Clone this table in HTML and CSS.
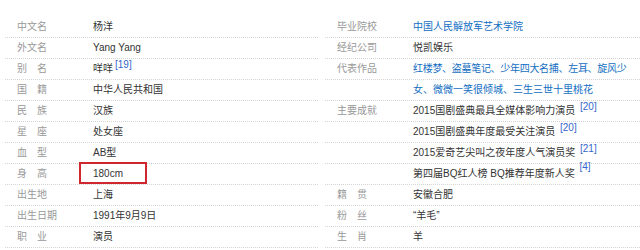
FILE: index.html
```html
<!DOCTYPE html>
<html lang="zh-CN">
<head>
<meta charset="utf-8">
<title>杨洋 基本信息</title>
<link rel="stylesheet" href="styles.css">
</head>
<body>
<div class="info">
  <dl class="col">
    <div class="row"><dt class="name">中文名</dt><dd class="value">杨洋</dd></div>
    <div class="row"><dt class="name">外文名</dt><dd class="value">Yang Yang</dd></div>
    <div class="row"><dt class="name two">别名</dt><dd class="value">咩咩<sup class="ref">[19]</sup></dd></div>
    <div class="row"><dt class="name two">国籍</dt><dd class="value">中华人民共和国</dd></div>
    <div class="row"><dt class="name two">民族</dt><dd class="value">汉族</dd></div>
    <div class="row"><dt class="name two">星座</dt><dd class="value">处女座</dd></div>
    <div class="row"><dt class="name two">血型</dt><dd class="value">AB型</dd></div>
    <div class="row"><dt class="name two">身高</dt><dd class="value marked">180cm<span class="mark"></span></dd></div>
    <div class="row"><dt class="name">出生地</dt><dd class="value">上海</dd></div>
    <div class="row"><dt class="name">出生日期</dt><dd class="value">1991年9月9日</dd></div>
    <div class="row"><dt class="name two">职业</dt><dd class="value">演员</dd></div>
  </dl>
  <dl class="col">
    <div class="row"><dt class="name">毕业院校</dt><dd class="value"><a class="link">中国人民解放军艺术学院</a></dd></div>
    <div class="row"><dt class="name">经纪公司</dt><dd class="value">悦凯娱乐</dd></div>
    <div class="row"><dt class="name">代表作品</dt><dd class="value"><a class="link narrow">红楼梦、盗墓笔记、少年四大名捕、左耳、旋风少</a></dd></div>
    <div class="row"><dt class="name"></dt><dd class="value"><a class="link">女、微微一笑很倾城、三生三世十里桃花</a></dd></div>
    <div class="row"><dt class="name">主要成就</dt><dd class="value">2015国剧盛典最具全媒体影响力演员 <sup class="ref">[20]</sup></dd></div>
    <div class="row"><dt class="name"></dt><dd class="value">2015国剧盛典年度最受关注演员 <sup class="ref">[20]</sup></dd></div>
    <div class="row"><dt class="name"></dt><dd class="value">2015爱奇艺尖叫之夜年度人气演员奖 <sup class="ref">[21]</sup></dd></div>
    <div class="row"><dt class="name"></dt><dd class="value">第四届BQ红人榜 BQ推荐年度新人奖 <sup class="ref high">[4]</sup></dd></div>
    <div class="row"><dt class="name two">籍贯</dt><dd class="value">安徽合肥</dd></div>
    <div class="row"><dt class="name two">粉丝</dt><dd class="value">“羊毛”</dd></div>
    <div class="row"><dt class="name two">生肖</dt><dd class="value">羊</dd></div>
  </dl>
</div>
</body>
</html>
```
FILE: styles.css
```css
html, body {
  margin: 0;
  padding: 0;
  background: #fff;
}
body {
  font-family: "Liberation Sans", "Noto Sans CJK SC", sans-serif;
  font-size: 10px;
  color: #333;
}
.info {
  display: grid;
  grid-template-columns: 313px 315px;
  column-gap: 7px;
  padding: 17px 0 0 5px;
}
.col {
  margin: 0;
  display: flex;
  flex-direction: column;
}
.row {
  display: flex;
  height: 20px;
  line-height: 20px;
  border-bottom: 1px dotted #d4d4d4;
  white-space: nowrap;
}
.name {
  width: 76px;
  padding-left: 12px;
  color: #999;
  flex: none;
}
.name.two {
  letter-spacing: 1em;
}
.value {
  margin: 0;
  color: #333;
  position: relative;
}
.link {
  color: #136ec2;
}
.link.narrow {
  letter-spacing: -0.3px;
}
.ref {
  color: #3366cc;
  font-size: 10px;
  line-height: 0;
  vertical-align: 4px;
  margin-left: 2px;
}
.ref.high {
  vertical-align: 7px;
}
.mark {
  position: absolute;
  left: -14px;
  top: -2px;
  width: 64px;
  height: 18px;
  border: 2px solid #d0262e;
}
```
